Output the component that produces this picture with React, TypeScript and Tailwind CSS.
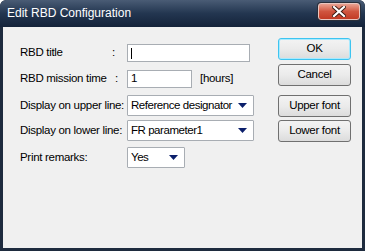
import React from "react";

const titleFont = { fontFamily: '"Liberation Sans", Arial, sans-serif' };
const bodyFont = { fontFamily: '"Liberation Sans", Arial, sans-serif' };

function Arrow() {
  return (
    <svg width="9" height="5" viewBox="0 0 9 5" className="block">
      <polygon points="0,0 9,0 4.5,5" fill="#0b1f6b" />
    </svg>
  );
}

function Select({ value, w }: { value: string; w: string }) {
  return (
    <div className={`${w} h-[21px] flex items-center justify-between border border-[#a8adb3] bg-white rounded-[1px] pl-[3px] pr-[6px]`}>
      <span className="text-[11.5px] tracking-[-0.45px] text-black leading-none whitespace-nowrap">{value}</span>
      <Arrow />
    </div>
  );
}

function Btn({ label, focus }: { label: string; focus?: boolean }) {
  return (
    <div
      className={`w-[73px] h-[22px] flex items-center justify-center rounded-[3px] border ${
        focus ? "border-[#3dc4f0] shadow-[inset_0_0_0_1px_#a8eaff]" : "border-[#707070]"
      } bg-gradient-to-b from-[#f3f3f3] via-[#ebebeb] to-[#dcdcdc] text-[11.5px] tracking-[-0.3px] text-black whitespace-nowrap`}
    >
      {label}
    </div>
  );
}

function Row({ label, colonAt, children, mt }: { label: string; colonAt?: string; children: React.ReactNode; mt: string }) {
  return (
    <div className={`flex items-center ${mt}`}>
      <div className="w-[107px] flex text-[11.5px] tracking-[-0.3px] text-black whitespace-nowrap">
        {colonAt ? (
          <>
            <span className={colonAt}>{label}</span>
            <span>:</span>
          </>
        ) : (
          <span>{label}</span>
        )}
      </div>
      {children}
    </div>
  );
}

export default function App() {
  return (
    <div className="w-[365px] h-[251px] flex flex-col bg-[#1e2b3e] rounded-t-[6px] overflow-hidden">
      <div style={titleFont} className="h-[27px] flex items-start bg-gradient-to-b from-[#4a5c75] via-[#233650] to-[#14233a] rounded-t-[6px]">
        <div className="pl-[7px] pt-[7px] text-[12px] text-white leading-none">Edit RBD Configuration</div>
        <div className="ml-auto mr-[5px] mt-[3px] w-[42px] h-[17px] rounded-[3px] border border-[#e9c6c0] bg-gradient-to-b from-[#e9a191] via-[#d0553f] to-[#c23a24] flex items-center justify-center shadow-[0_0_0_1px_#2a2f3a]">
          <svg width="14" height="11" viewBox="0 0 14 11">
            <path d="M2 1 L12 10 M12 1 L2 10" stroke="#3a1b14" strokeWidth="4" strokeLinecap="square" />
            <path d="M2 1 L12 10 M12 1 L2 10" stroke="#ffffff" strokeWidth="2.2" strokeLinecap="square" />
          </svg>
        </div>
      </div>
      <div style={bodyFont} className="flex-1 mx-[3px] mb-[3px] bg-[#f0f0f0] flex">
        <div className="pl-[17px] pt-[17px] flex flex-col">
          <Row label="RBD title" colonAt="w-[92px]" mt="mt-0">
            <div className="w-[123px] h-[18px] border border-[#a8adb3] bg-white flex items-center pl-[3px]">
              <div className="w-[1px] h-[11px] bg-black" />
            </div>
          </Row>
          <Row label="RBD mission time" colonAt="w-[95px]" mt="mt-[8px]">
            <div className="w-[65px] h-[18px] border border-[#a8adb3] bg-white flex items-center pl-[3px] text-[11.5px]">1</div>
            <span className="ml-[8px] text-[11.5px] tracking-[-0.3px]">[hours]</span>
          </Row>
          <Row label="Display on upper line:" mt="mt-[7px]">
            <Select value="Reference designator" w="w-[127px]" />
          </Row>
          <Row label="Display on lower line:" mt="mt-[4px]">
            <Select value="FR parameter1" w="w-[127px]" />
          </Row>
          <Row label="Print remarks:" mt="mt-[6px]">
            <Select value="Yes" w="w-[58px]" />
          </Row>
        </div>
        <div className="ml-auto mr-[11px] pt-[11px] flex flex-col">
          <Btn label="OK" focus />
          <div className="mt-[4px]"><Btn label="Cancel" /></div>
          <div className="mt-[9px]"><Btn label="Upper font" /></div>
          <div className="mt-[3px]"><Btn label="Lower font" /></div>
        </div>
      </div>
    </div>
  );
}
